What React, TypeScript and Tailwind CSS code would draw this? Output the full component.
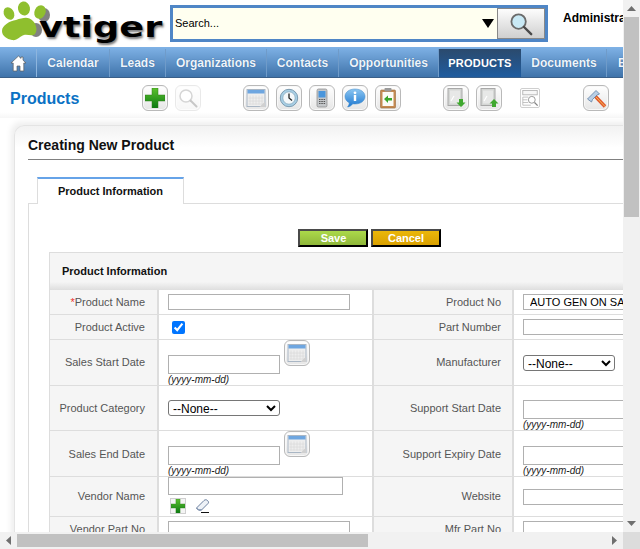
import React from "react";

const F = "font-['Liberation_Sans',Arial,sans-serif]";

function Frame({ children, faded, size = 26 }: { children: React.ReactNode; faded?: boolean; size?: number }) {
  return (
    <div
      className={`flex items-center justify-center rounded-[6px] border border-[#b9b9b9] bg-[linear-gradient(#ffffff,#e6e6e6)] shadow-[inset_0_0_0_1px_#f8f8f8] ${faded ? "opacity-30" : ""}`}
      style={{ width: size, height: size }}
    >
      {children}
    </div>
  );
}

const Plus = ({ s = 20 }: { s?: number }) => (
  <svg width={s} height={s} viewBox="0 0 20 20">
    <defs>
      <linearGradient id="pg" x1="0" y1="0" x2="0" y2="1">
        <stop offset="0" stopColor="#5cc12e" />
        <stop offset="1" stopColor="#0b7a12" />
      </linearGradient>
    </defs>
    <path d="M7 0h6v7h7v6h-7v7H7v-7H0V7h7z" fill="url(#pg)" stroke="#2c7d18" strokeWidth=".5" />
  </svg>
);

const Lens = ({ s = 20, glass = "#c9e9f5", stroke = "#6b6b6b" }: { s?: number; glass?: string; stroke?: string }) => (
  <svg width={s} height={s} viewBox="0 0 20 20">
    <circle cx="8" cy="8" r="6" fill={glass} stroke={stroke} strokeWidth="1.5" />
    <path d="M12.5 12.5L18.5 18.5" stroke="#4a4a4a" strokeWidth="2" strokeLinecap="round" />
  </svg>
);

const Cal = () => (
  <svg width="20" height="20" viewBox="0 0 20 20">
    <rect x="1" y="1.5" width="18" height="17" fill="#eeeeee" stroke="#a9b6c4" />
    <rect x="1.5" y="2" width="17" height="3.5" fill="#6ea6e0" />
    <path d="M4 7.5v9M7 7.5v9M10 7.5v9M13 7.5v9M16 7.5v9M2.5 10h15M2.5 13h15M2.5 16h15" stroke="#dadada" strokeWidth=".8" />
    <path d="M19 13.5L13.5 19H19z" fill="#d0d0d0" />
  </svg>
);

const Clock = () => (
  <svg width="20" height="20" viewBox="0 0 20 20">
    <circle cx="10" cy="10" r="8.7" fill="#a9d0e6" stroke="#7c9bb0" />
    <circle cx="10" cy="10" r="6.2" fill="#f4f8fa" stroke="#6d94ad" strokeWidth=".6" />
    <path d="M10 5.5V10l3 2.5" fill="none" stroke="#222" strokeWidth="1.3" />
  </svg>
);

const Phone = () => (
  <svg width="20" height="20" viewBox="0 0 20 20">
    <rect x="5" y="1" width="10" height="18" rx="1.5" fill="#c4c7ca" stroke="#888" strokeWidth=".7" />
    <rect x="6.5" y="3" width="7" height="6.5" fill="#4a96dc" />
    <path d="M7 11.5h1.5M9.3 11.5h1.5M11.6 11.5h1.5M7 13.5h1.5M9.3 13.5h1.5M11.6 13.5h1.5M7 15.5h1.5M9.3 15.5h1.5M11.6 15.5h1.5" stroke="#555" strokeWidth="1.1" />
  </svg>
);

const Info = () => (
  <svg width="22" height="22" viewBox="0 0 22 22">
    <defs>
      <linearGradient id="ib" x1="0" y1="0" x2="0" y2="1">
        <stop offset="0" stopColor="#8cc6f2" />
        <stop offset="1" stopColor="#1d78d0" />
      </linearGradient>
    </defs>
    <path d="M11 2c5.5 0 10 3 10 7.5S16.500 17 11 17c-.8 0-1.500 0-2.200-.2C7.500 18.500 5.500 20 3.500 20c1-1 1.700-2.500 1.700-4.200C2.800 14.500 1 12.300 1 9.500 1 5 5.500 2 11 2z" fill="url(#ib)" stroke="#3b86c9" strokeWidth=".5" />
    <rect x="9.800" y="8" width="2.400" height="6" fill="#fff" />
    <circle cx="11" cy="5.800" r="1.400" fill="#fff" />
  </svg>
);

const Clip = () => (
  <svg width="20" height="22" viewBox="0 0 20 22">
    <rect x="2.500" y="3" width="15" height="18" rx="1" fill="#c58a52" stroke="#99693b" strokeWidth=".6" />
    <rect x="4.500" y="5" width="11" height="14" fill="#fbfbf6" />
    <rect x="6.500" y="1" width="7" height="3.500" rx=".8" fill="#9a9a9a" />
    <path d="M6 12l4-3.500V11h4v2.500h-4V16z" fill="#3aa52a" />
  </svg>
);

const Doc = ({ up }: { up?: boolean }) => (
  <svg width="22" height="22" viewBox="0 0 22 22">
    <rect x="3" y="1.500" width="14" height="17" fill="#d4d6d4" stroke="#a8a8a8" />
    <rect x="5" y="3.500" width="10" height="13" fill="#e7e8e7" />
    <path d="M6 14l3-5" stroke="#fff" strokeWidth="1.200" />
    {up ? (
      <path d="M16 12l4.500 4.500h-2.500v3.500h-4v-3.500h-2.500z" fill="#3fa82f" />
    ) : (
      <path d="M14 12h4v3.500h2.500l-4.500 4.500-4.500-4.500h2.500z" fill="#3fa82f" />
    )}
  </svg>
);

const Dup = () => (
  <svg width="20" height="20" viewBox="0 0 20 20">
    <rect x="2" y="1.500" width="16" height="5" fill="#f4f4f4" stroke="#8d8d8d" strokeWidth=".8" />
    <path d="M2 9h6M2 12h5M2 15h6M2 18h9M2 9v9" stroke="#9a9a9a" strokeWidth=".8" fill="none" />
    <circle cx="12" cy="12" r="3.800" fill="#fff" stroke="#777" strokeWidth="1" />
    <path d="M15 15l3.500 3.500" stroke="#666" strokeWidth="1.400" />
  </svg>
);

const Hammer = () => (
  <svg width="22" height="22" viewBox="0 0 22 22">
    <path d="M10 9l10 10.500" stroke="#e2552a" strokeWidth="3.400" />
    <path d="M10 9l10 10.500" stroke="#f3c05a" strokeWidth="1" />
    <path d="M2.500 12L11 3.500l3.500 3.500-2.500 1-4.500 4.500-1 2.500z" fill="#b9cfe6" stroke="#5f7fa3" strokeWidth=".8" />
  </svg>
);

const Eraser = () => (
  <svg width="16" height="16" viewBox="0 0 16 16">
    <path d="M1.500 10L9 2.500c1-1 2.500-1 3.500 0s1.500 2 .5 3L6.500 12H3.500z" fill="#eef2f7" stroke="#6b7f9e" />
    <path d="M1.500 10l2 2h3" fill="#c6d4e6" stroke="#6b7f9e" />
    <path d="M6 14.500h8" stroke="#111" strokeWidth="1" />
  </svg>
);

const Home = () => (
  <svg width="17" height="17" viewBox="0 0 17 17">
    <path d="M8.500 1L1 8h2.200v8h3.800v-5h3v5h3.800V8H16l-3-2.800V2h-2v1.400z" fill="#fff" stroke="#5b5b5b" strokeWidth=".7" />
  </svg>
);

function Logo() {
  return (
    <div className="relative h-[47px] w-[170px] shrink-0 overflow-hidden">
      <svg width="60" height="45" viewBox="0 0 60 45" className="absolute left-0 top-0">
        <g fill="#2e2e2e" opacity=".6">
          <ellipse cx="44" cy="15" rx="6" ry="7" />
          <ellipse cx="36" cy="30" rx="6" ry="7" />
        </g>
        <g fill="#8fbf2e">
          <path d="M2 31c0-6 8-10 14-11 7-2 12-4 17 1 3 3 5 9 2 13-3 3-7 0-11 1-4 1-7 6-12 5-5-1-10-4-10-9z" />
          <ellipse cx="9" cy="13.500" rx="5" ry="6.500" transform="rotate(-30 9 13.500)" />
          <ellipse cx="24" cy="8.500" rx="6" ry="7" transform="rotate(-10 24 8.500)" />
          <ellipse cx="40" cy="12" rx="5.500" ry="7" transform="rotate(25 40 12)" />
        </g>
      </svg>
      <span
        className="absolute left-[39px] top-[12px] origin-left scale-x-[1.31] whitespace-nowrap text-[28px] font-bold leading-[32px] text-black [font-family:'DejaVu_Sans',sans-serif] [text-shadow:1px_2px_2px_#777]"
      >
        vtiger
      </span>
    </div>
  );
}

function SearchBox() {
  return (
    <div className="flex h-[37px] w-[378px] shrink-0 items-stretch border-[3px] border-[#4f86c6] bg-[#fffff0]">
      <div className="flex flex-1 items-center pl-[2px] pr-[3px] text-[11px] text-black">
        <span className="flex-1">Search...</span>
        <svg width="12" height="9" viewBox="0 0 12 9">
          <path d="M0 0h12L6 9z" fill="#000" />
        </svg>
      </div>
      <div className="flex w-[48px] items-center justify-center border border-[#888] bg-[linear-gradient(#fdfdfd,#cfcfcf)]">
        <Lens s={24} />
      </div>
    </div>
  );
}

const navItems: [string, number][] = [
  ["Calendar", 73],
  ["Leads", 56],
  ["Organizations", 101],
  ["Contacts", 72],
  ["Opportunities", 100],
];

function Nav() {
  return (
    <div className="flex h-[31px] w-[900px] border-b border-[#3a5f88] bg-[linear-gradient(#7fb2e6,#3f73aa)] text-[12px] font-bold text-[#eef5fc] [text-shadow:0_0_1px_#2c5687]">
      <div className="mt-[2px] flex w-[37px] items-center justify-center border-r border-[#8db5de]">
        <Home />
      </div>
      {navItems.map(([n, w]) => (
        <div key={n} className="mt-[2px] flex items-center justify-center border-r border-[#6f9bc9]" style={{ width: w }}>
          {n}
        </div>
      ))}
      <div className="mt-[2px] flex w-[82px] items-center justify-center bg-[linear-gradient(#2b4a6d,#1f5c9f)] text-[11px] tracking-[.2px] text-white">
        PRODUCTS
      </div>
      <div className="mt-[2px] flex w-[86px] items-center justify-center border-r border-[#6f9bc9] pl-[1px]">Documents</div>
      <div className="mt-[2px] flex items-center pl-[11px]">Email</div>
    </div>
  );
}

function Toolbar() {
  return (
    <div className="flex h-[40px] w-[900px] items-center bg-[linear-gradient(#ffffff_85%,#f6f6f6)]">
      <div className="w-[142px] pl-[10px] pt-[1px] text-[16px] font-bold text-[#0b72c4]">Products</div>
      <Frame><Plus /></Frame>
      <div className="w-[7px]" />
      <Frame faded><Lens glass="#ffffff" stroke="#777" /></Frame>
      <div className="w-[42px]" />
      <div className="flex gap-[7px]">
        <Frame><Cal /></Frame>
        <Frame><Clock /></Frame>
        <Frame><Phone /></Frame>
        <Frame><Info /></Frame>
        <Frame><Clip /></Frame>
      </div>
      <div className="w-[42px]" />
      <div className="flex gap-[7px]">
        <Frame><Doc /></Frame>
        <Frame><Doc up /></Frame>
      </div>
      <div className="w-[18px]" />
      <div className="flex h-[20px] w-[20px] items-center justify-center rounded-[2px] border border-[#c4c4c4] opacity-80">
        <Dup />
      </div>
      <div className="w-[43px]" />
      <Frame><Hammer /></Frame>
    </div>
  );
}

const inputCls = "block border border-[#b0b0b0] bg-white text-[11px] text-black outline-none";
const selectCls = "block h-[16px] rounded-[3px] border border-[#767676] bg-white text-[12px] leading-[14px] text-black";
const Hint = () => <div className="text-[10px] italic leading-[11px] text-[#222]">(yyyy-mm-dd)</div>;

function DateField({ icon, top = 15 }: { icon?: boolean; top?: number }) {
  return (
    <div className="flex items-start gap-[4px] self-start">
      <div style={{ paddingTop: top }}>
        <input className={`${inputCls} h-[19px] ${icon ? "w-[112px]" : "w-[182px]"}`} />
        <Hint />
      </div>
      {icon && <Frame><Cal /></Frame>}
    </div>
  );
}

function Row({ h, l1, v1, l2, v2, low }: { h: number; l1: React.ReactNode; v1: React.ReactNode; l2: string; v2: React.ReactNode; low?: boolean }) {
  const label = `flex items-center justify-end bg-[#f5f5f5] text-[11px] text-[#555] ${low ? "pt-[1px]" : ""}`;
  return (
    <div className="flex border-b border-[#ddd]" style={{ height: h }}>
      <div className={`${label} w-[107px] shrink-0 pr-[12px]`}>{l1}</div>
      <div className="flex w-[217px] shrink-0 items-center border-x-2 border-[#ddd] pl-[9px]">{v1}</div>
      <div className={`${label} w-[138px] shrink-0 pr-[11px]`}>{l2}</div>
      <div className="flex w-[360px] shrink-0 items-center border-l-2 border-[#ddd] pl-[9px]">{v2}</div>
    </div>
  );
}

const Text = ({ value, w = 182 }: { value?: string; w?: number }) => (
  <input readOnly defaultValue={value} className={`${inputCls} h-[16px] px-[6px]`} style={{ width: w }} />
);

function Form() {
  return (
    <div className="ml-[20px] w-[830px] border-l border-[#ddd]">
      <div className="h-[38px] border-t border-[#ddd] bg-[linear-gradient(#f5f5f5_78%,#dedede)] pl-[12px] pt-[12px] text-[11px] font-bold leading-[13px] text-[#111]">
        Product Information
      </div>
      <Row h={25} l1={<><span className="text-[#e33]">*</span>Product Name</>} v1={<Text />} l2="Product No" v2={<Text value="AUTO GEN ON SAVE" />} />
      <Row
        h={25}
        l1="Product Active"
        v1={<input type="checkbox" defaultChecked className="ml-[4px] h-[13px] w-[13px]" />}
        l2="Part Number"
        v2={<Text />}
      />
      <Row
        h={46}
        l1="Sales Start Date"
        v1={<DateField icon />}
        l2="Manufacturer"
        v2={<select className={`${selectCls} w-[92px]`}><option>--None--</option></select>}
      />
      <Row
        h={45}
        l1="Product Category"
        v1={<select className={`${selectCls} w-[112px]`}><option>--None--</option></select>}
        l2="Support Start Date"
        v2={<DateField top={14} />}
      />
      <Row h={46} low l1="Sales End Date" v1={<DateField icon />} l2="Support Expiry Date" v2={<DateField />} />
      <Row
        h={40}
        l1="Vendor Name"
        v1={
          <div className="self-start">
            <input className={`${inputCls} h-[18px] w-[175px]`} />
            <div className="ml-[2px] mt-[3px] flex items-center gap-[9px]">
              <div className="flex h-[16px] w-[16px] items-center justify-center border border-[#cfcfcf] bg-[#f4f4f4]">
                <Plus s={14} />
              </div>
              <Eraser />
            </div>
          </div>
        }
        l2="Website"
        v2={<Text />}
      />
      <Row h={25} l1="Vendor Part No" v1={<div className="self-start pt-[4px]"><Text /></div>} l2="Mfr Part No" v2={<div className="self-start pt-[4px]"><Text /></div>} />
    </div>
  );
}

function Panel() {
  return (
    <div className="ml-[14px] mt-[7px] w-[880px] rounded-tl-[10px] border-l border-t border-[#e4e4e4] bg-[linear-gradient(#f2f2f2,#ffffff_22px)] shadow-[-3px_-3px_6px_#eeeeee]">
      <div className="ml-[13px] flex h-[34px] items-center border-b border-[#808080] pt-[6px] text-[14px] font-bold text-[#111]">
        Creating New Product
      </div>
      <div className="relative ml-[22px] mt-[17px] -mb-px flex h-[27px] w-[147px] items-center justify-center border-x border-t-2 border-[#ddd] border-t-[#66a3e8] bg-white text-[11px] font-bold text-[#111]">
        Product Information
      </div>
      <div className="ml-[13px] border-l border-t border-[#ddd] pb-[10px]">
        <div className="ml-[269px] flex gap-[3px] pt-[25px] pb-[5px]">
          <button className="h-[18px] w-[70px] border-2 border-[#4a4a4a] border-b-black border-r-black bg-[linear-gradient(#abd94a,#8fb73a)] pl-[1px] text-[11px] font-bold leading-[12px] text-white">
            Save
          </button>
          <button className="h-[18px] w-[70px] border-2 border-[#4a4a4a] border-b-black border-r-black bg-[linear-gradient(#ebb70a,#d9a000)] text-[11px] font-bold leading-[12px] text-white">
            Cancel
          </button>
        </div>
        <Form />
      </div>
    </div>
  );
}

const Tri = ({ d }: { d: string }) => (
  <svg width="9" height="9" viewBox="0 0 9 9">
    <path d={d} fill="#6f6f6f" />
  </svg>
);

export default function App() {
  return (
    <div className={`${F} flex h-[549px] w-[640px] flex-col overflow-hidden bg-white`}>
      <div className="flex h-[532px]">
        <div className="w-[623px] overflow-hidden">
          <div className="flex h-[47px] w-[900px] pt-[5px]">
            <div className="-mt-[5px]"><Logo /></div>
            <SearchBox />
            <div className="ml-[15px] mt-[4px] whitespace-nowrap text-[12px] font-bold text-black">Administrator</div>
          </div>
          <Nav />
          <Toolbar />
          <Panel />
        </div>
        <div className="flex w-[17px] flex-col items-center justify-between bg-[#f1f1f1]">
          <div className="flex w-full flex-col items-center">
            <div className="flex h-[17px] items-center"><Tri d="M4.500 2L9 7H0z" /></div>
            <div className="h-[200px] w-[15px] bg-[#c1c1c1]" />
          </div>
          <div className="flex h-[17px] items-center"><Tri d="M0 2h9L4.500 7z" /></div>
        </div>
      </div>
      <div className="flex h-[17px] items-center bg-[#f1f1f1]">
        <div className="flex w-[17px] justify-center"><Tri d="M7 0v9L2 4.500z" /></div>
        <div className="h-[13px] w-[351px] bg-[#c1c1c1]" />
        <div className="flex-1" />
        <div className="flex w-[17px] justify-center"><Tri d="M2 0v9l5-4.500z" /></div>
        <div className="h-[17px] w-[17px] bg-[#dcdcdc]" />
      </div>
    </div>
  );
}
